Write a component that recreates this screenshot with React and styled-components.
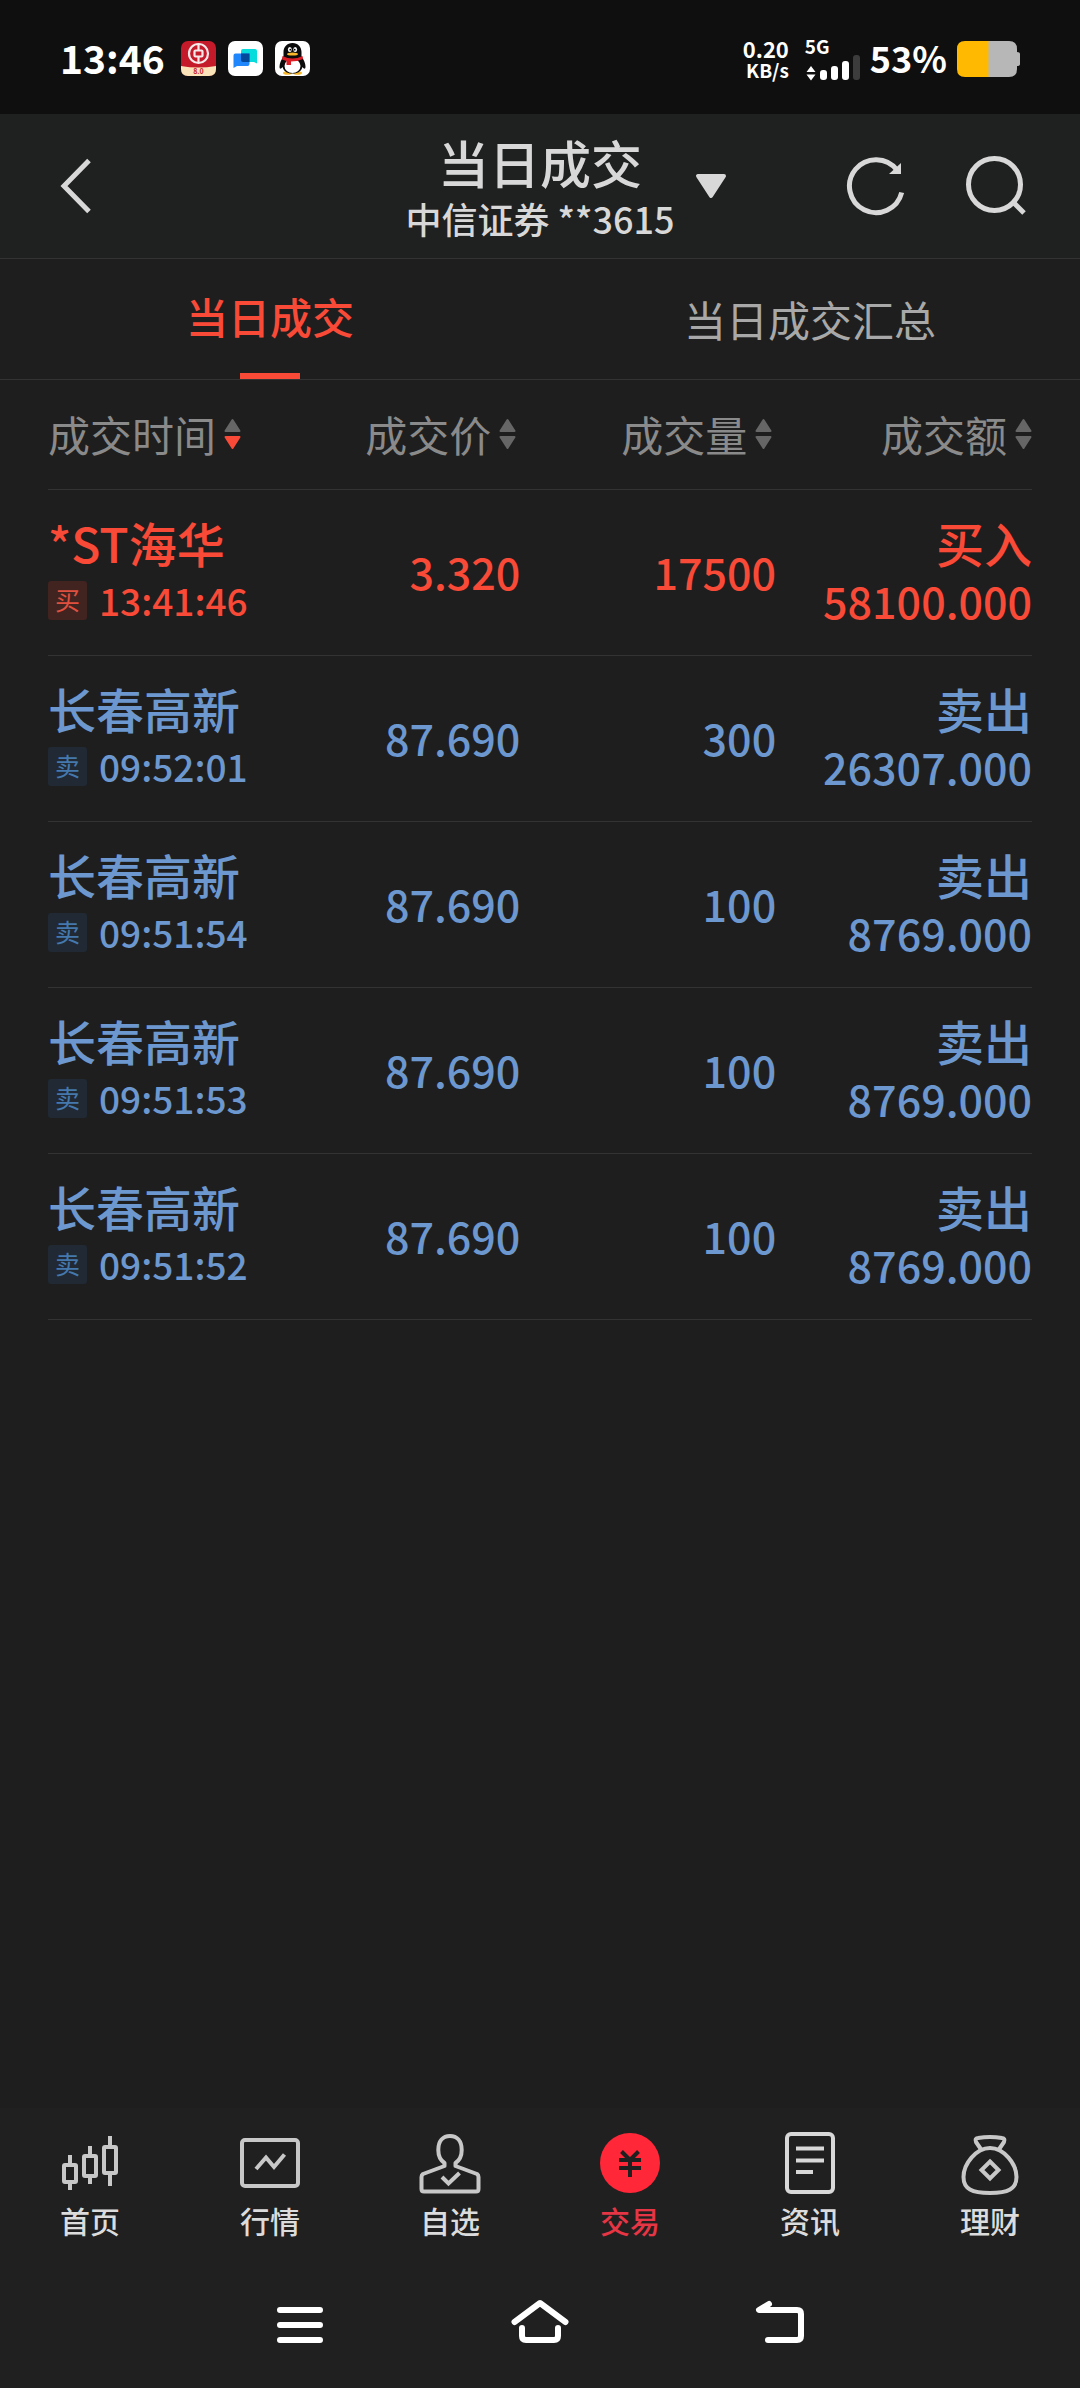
import React, { useState } from 'react';
import styled, { createGlobalStyle } from 'styled-components'

const red = '#f94a38'
const blue = '#6c98cf'

const GlobalStyle = createGlobalStyle`
  * {
    box-sizing: border-box;
  }
  body {
    margin: 0;
    background-color: #1e1e1e;
    font-family: "Noto Sans CJK SC", "Noto Sans", sans-serif;
    color: #d8d8d8;
  }
  button {
    padding: 0;
    border: none;
    background: none;
    color: inherit;
    font: inherit;
    cursor: pointer;
  }
  svg {
    display: block;
  }
`
const Page = styled.div`
  display: flex;
  flex-direction: column;
  min-height: 100vh;
`

/* status bar */

const StatusBar = styled.div`
  display: flex;
  justify-content: space-between;
  align-items: center;
  height: 114px;
  padding: 3px 60px 0;
  background-color: #0f0f0f;
  color: #fff;
`
const StatusGroup = styled.div`
  display: flex;
  align-items: center;
  gap: ${props => props.$gap}px;
`
const Clock = styled.span`
  margin-right: 4px;
  padding-bottom: 4px;
  font-size: 39px;
  font-weight: 700;
  line-height: 44px;
`
const NetSpeed = styled.span`
  display: flex;
  flex-direction: column;
  align-items: flex-end;
  margin-right: 6px;
  font-weight: 700;
  line-height: 22px;
`
const Speed = styled.span`
  font-size: 22px;
`
const SpeedUnit = styled.span`
  font-size: 19px;
`
const Signal = styled.span`
  display: flex;
  flex-direction: column;
  font-size: 19px;
  font-weight: 700;
  line-height: 18px;
`
const Percent = styled.span`
  padding-bottom: 4px;
  font-size: 36px;
  font-weight: 700;
  line-height: 44px;
`

/* title bar */

const TitleBar = styled.header`
  display: grid;
  grid-template-columns: 1fr auto 1fr;
  align-items: center;
  height: 145px;
  padding: 0 54px;
  background-color: #1f2120;
  border-bottom: 1px solid #333;
`
const IconButton = styled.button`
  width: 64px;
  height: 64px;
`
const TitleText = styled.div`
  text-align: center;
`
const Title = styled.h1`
  margin: 0;
  font-size: 51px;
  font-weight: 500;
  line-height: 64px;
`
const Account = styled.p`
  margin: 0;
  font-size: 36px;
  font-weight: 500;
  line-height: 48px;
`
const TitleActions = styled.div`
  display: flex;
  align-items: center;
  gap: 54px;
`
const DropButton = styled.button`
  margin: 0 auto 0 20px;
`

/* tabs */

const Tabs = styled.div`
  display: flex;
  height: 121px;
  border-bottom: 1px solid #333;
`
const Tab = styled.button`
  position: relative;
  flex: 1;
  padding-bottom: ${props => props.$active ? 8 : 2}px;
  font-size: 42px;
  font-weight: ${props => props.$active ? 500 : 400};
  color: ${props => props.$active ? red : '#a8a8a8'};
  &::after {
    content: '';
    position: absolute;
    left: 50%;
    bottom: 0;
    width: 60px;
    height: 6px;
    margin-left: -30px;
    background-color: ${props => props.$active ? red : 'transparent'};
  }
`

/* deals */

const Main = styled.main`
  flex: 1;
  padding: 0 48px;
`
const Table = styled.table`
  width: 100%;
  border-collapse: collapse;
  table-layout: fixed;
`
const HeadCell = styled.th`
  width: ${props => props.$width};
  height: 109px;
  padding: 0;
  border-bottom: 1px solid #333;
  font-weight: 400;
  &:not(:last-child) {
    padding-right: 4px;
  }
`
const SortButton = styled.button`
  display: flex;
  align-items: center;
  gap: 8px;
  margin-left: ${props => props.$left ? '0' : 'auto'};
  font-size: 42px;
  line-height: 60px;
  color: #8a8a8a;
  white-space: nowrap;
`
const Row = styled.tr`
  color: ${props => props.$buy ? red : blue};
`
const Cell = styled.td`
  height: 166px;
  padding: 0 0 2px;
  border-bottom: 1px solid #333;
  text-align: ${props => props.$left ? 'left' : 'right'};
  white-space: nowrap;
`
const Name = styled.div`
  font-size: 48px;
  font-weight: 500;
  line-height: 58px;
`
const Figure = styled.div`
  font-size: 43px;
  font-weight: 500;
  line-height: 58px;
`
const TimeLine = styled.div`
  display: flex;
  align-items: center;
  gap: 12px;
  font-size: 37px;
  font-weight: 500;
  line-height: 58px;
`
const Badge = styled.span`
  width: 39px;
  height: 39px;
  border-radius: 3px;
  background-color: ${props => props.$buy ? '#412320' : '#202934'};
  color: ${props => props.$buy ? '#e0503f' : '#4579ad'};
  font-size: 25px;
  font-weight: 400;
  line-height: 37px;
  text-align: center;
`

/* bottom bars */

const BottomNav = styled.nav`
  display: flex;
  padding: 24px 0 20px;
  background-color: #202020;
`
const NavLink = styled.a`
  flex: 1;
  display: flex;
  flex-direction: column;
  align-items: center;
  gap: 4px;
  color: ${props => props.$active ? '#e63544' : '#dcdcdc'};
  font-size: 30px;
  font-weight: 500;
  line-height: 40px;
  text-decoration: none;
`
const SystemNav = styled.div`
  display: flex;
  justify-content: center;
  gap: 176px;
  padding: 33px 0 31px;
  background-color: #202020;
`

const BankIcon = () => (
  <svg width="35" height="35" viewBox="0 0 35 35">
    <rect width="35" height="35" rx="7" fill="#c41a2a" />
    <path d="M0 25 Q17 28 35 25 V28 Q35 35 28 35 H7 Q0 35 0 28Z" fill="#fae3b8" />
    <circle cx="17.5" cy="12.5" r="9.5" fill="none" stroke="#f6e9ea" strokeWidth="2.2" />
    <rect x="13.5" y="9.5" width="8" height="6" rx="1" fill="none" stroke="#f6e9ea" strokeWidth="2.2" />
    <path d="M17.5 3V9.5M17.5 15.5V22" stroke="#f6e9ea" strokeWidth="2.2" />
    <text x="17.5" y="32.5" textAnchor="middle" fontSize="7" fontWeight="700" fill="#c8202c">8.0</text>
  </svg>
)

const ChatIcon = () => (
  <svg width="35" height="35" viewBox="0 0 35 35">
    <rect width="35" height="35" rx="7" fill="#fff" />
    <path d="M15 8H27Q29 8 29 10V22.5L26 21H15Q13 21 13 19V10Q13 8 15 8Z" fill="#07dcdc" />
    <path d="M7.5 12.5H21.5V23Q21.5 25 19.5 25H9L5.5 27V14.5Q5.5 12.5 7.5 12.5Z" fill="#1f86fb" />
    <path d="M13 12.5H21.5V21H15Q13 21 13 19Z" fill="#04489c" />
  </svg>
)

const PenguinIcon = () => (
  <svg width="35" height="35" viewBox="0 0 35 35">
    <rect width="35" height="35" rx="7" fill="#fff" />
    <ellipse cx="12.5" cy="32" rx="4.5" ry="1.8" fill="#f8b62b" />
    <ellipse cx="22.5" cy="32" rx="4.5" ry="1.8" fill="#f8b62b" />
    <path d="M17.5 2C12 2 8.5 6 8.5 11V15C6.5 18.5 4.5 22 4.5 25.5C4.5 28.5 6 28 7.5 26C9 31 13 32.5 17.5 32.5C22 32.5 26 31 27.5 26C29 28 30.5 28.5 30.5 25.5C30.5 22 28.5 18.5 26.5 15V11C26.5 6 23 2 17.5 2Z" fill="#0b0b0b" />
    <ellipse cx="17.5" cy="25" rx="8" ry="7" fill="#fff" />
    <ellipse cx="14.8" cy="8.5" rx="1.9" ry="2.6" fill="#fff" />
    <ellipse cx="20.2" cy="8.5" rx="1.9" ry="2.6" fill="#fff" />
    <circle cx="15.3" cy="8.7" r="0.9" />
    <circle cx="19.7" cy="8.7" r="0.9" />
    <ellipse cx="17.5" cy="13" rx="5.5" ry="1.6" fill="#f8b62b" />
    <path d="M7.5 15Q17.5 20 27.5 15L28 18Q22 20.5 16 20.5V24H11.5V20L7 18.5Z" fill="#dc1f26" />
  </svg>
)

const SignalBars = () => (
  <svg width="55" height="26" viewBox="0 0 55 26">
    <path d="M6 11L10.5 17H1.5ZM1.5 19.5H10.5L6 25.5Z" fill="#fff" />
    <rect x="15" y="15" width="7" height="10" rx="3" fill="#fff" />
    <rect x="26" y="11" width="7" height="14" rx="3" fill="#fff" />
    <rect x="37" y="6" width="7" height="19" rx="3" fill="#fff" />
    <rect x="48" y="0" width="7" height="25" rx="3" fill="#3c3c3c" />
  </svg>
)

const Battery = () => (
  <svg width="63" height="36" viewBox="0 0 63 36">
    <path d="M31 0H52Q60 0 60 8V11Q63 11 63 13V23Q63 25 60 25V28Q60 36 52 36H31Z" fill="#b7b7b7" />
    <path d="M8 0H31.5V36H8Q0 36 0 28V8Q0 0 8 0Z" fill="#ffb900" />
  </svg>
)

const SortArrows = ({ down }) => (
  <svg width="17" height="32" viewBox="0 0 17 32">
    <g strokeWidth="2" strokeLinejoin="round">
      <path d="M8.5 2L15.5 13H1.5Z" fill="#666" stroke="#666" />
      <path d="M1.5 19H15.5L8.5 30Z" fill={down ? red : '#666'} stroke={down ? red : '#666'} />
    </g>
  </svg>
)

// outline icon on the 64 grid
const Icon = ({ children, color = '#c8c8c8', width = 4, cap = 'butt' }) => (
  <svg width="64" height="64" viewBox="0 0 64 64" fill="none" stroke={color} strokeWidth={width} strokeLinecap={cap} strokeLinejoin="round">
    {children}
  </svg>
)

const navItems = [
  {
    label: '首页',
    icon: (
      <Icon>
        <rect x="6" y="33" width="12" height="17" rx="1" />
        <rect x="26" y="24" width="12" height="20" rx="1" />
        <rect x="46" y="15" width="12" height="26" rx="1" />
        <path d="M12 23V33M12 50V58M32 14V24M32 44V52M52 4V15M52 41V54" />
      </Icon>
    ),
  },
  {
    label: '行情',
    icon: (
      <Icon>
        <rect x="4" y="8" width="56" height="46" rx="3" />
        <path d="M18 37L28 25.5L36 35L46.5 22.5" strokeLinejoin="miter" />
      </Icon>
    ),
  },
  {
    label: '自选',
    icon: (
      <Icon>
        <path d="M26.5 34V31C22 28 20.3 24 20.3 18C20.3 9 25 4 32 4C39 4 43.7 9 43.7 18C43.7 24 42 28 37.5 31V34L59 42Q60.5 43 60.5 45V57Q60.5 59.5 58 59.5H6Q3.5 59.5 3.5 57V45Q3.5 43 5 42Z" />
        <path d="M24 45L30.5 51.5L41.5 41" strokeLinejoin="miter" />
      </Icon>
    ),
  },
  {
    label: '交易',
    active: true,
    icon: (
      <Icon color="#202020">
        <circle cx="32" cy="31" r="30" fill="#ff2738" stroke="none" />
        <path d="M23.5 19.5L32 28L40.5 19.5M21 28H43M21 36H43M32 28V45" />
      </Icon>
    ),
  },
  {
    label: '资讯',
    icon: (
      <Icon color="#d8d8d8">
        <rect x="9" y="2" width="46" height="58" rx="4" />
        <path d="M18 16.5H46M18 28.5H46M18 40H35" />
      </Icon>
    ),
  },
  {
    label: '理财',
    icon: (
      <Icon>
        <path d="M32 16C18 16 5.5 32 5.5 45C5.5 57 14 61 32 61C50 61 58.5 57 58.5 45C58.5 32 46 16 32 16Z" />
        <path d="M23.5 18L18 10Q16.5 6.5 20 6Q32 4 44 6Q47.5 6.5 46 10L40.5 18" />
        <path d="M32 29.5L40.5 38L32 46.5L23.5 38Z" strokeLinejoin="miter" />
      </Icon>
    ),
  },
]

const columns = [
  { label: '成交时间', width: '24%' },
  { label: '成交价', width: '24%' },
  { label: '成交量', width: '26%' },
  { label: '成交额', width: '26%' },
]

const deals = [
  { name: '*ST海华', time: '13:41:46', price: '3.320', volume: '17500', amount: '58100.000', buy: true },
  { name: '长春高新', time: '09:52:01', price: '87.690', volume: '300', amount: '26307.000' },
  { name: '长春高新', time: '09:51:54', price: '87.690', volume: '100', amount: '8769.000' },
  { name: '长春高新', time: '09:51:53', price: '87.690', volume: '100', amount: '8769.000' },
  { name: '长春高新', time: '09:51:52', price: '87.690', volume: '100', amount: '8769.000' },
]

const Status = () => {
  return (
    <StatusBar>
      <StatusGroup $gap={12}>
        <Clock>13:46</Clock>
        <BankIcon />
        <ChatIcon />
        <PenguinIcon />
      </StatusGroup>
      <StatusGroup $gap={10}>
        <NetSpeed>
          <Speed>0.20</Speed>
          <SpeedUnit>KB/s</SpeedUnit>
        </NetSpeed>
        <Signal>
          5G
          <SignalBars />
        </Signal>
        <Percent>53%</Percent>
        <Battery />
      </StatusGroup>
    </StatusBar>
  )
}

const Header = () => {
  return (
    <TitleBar>
      <IconButton aria-label="返回">
        <Icon color="#d8d8d8" width={5}>
          <path d="M35 6.5L10 32L35 57.5" strokeLinejoin="miter" />
        </Icon>
      </IconButton>
      <TitleText>
        <Title>当日成交</Title>
        <Account>中信证券 **3615</Account>
      </TitleText>
      <TitleActions>
        <DropButton aria-label="切换账户">
          <svg width="32" height="26" viewBox="0 0 32 26">
            <path d="M3 3H29L16 23Z" fill="#d8d8d8" stroke="#d8d8d8" strokeWidth="4" strokeLinejoin="round" />
          </svg>
        </DropButton>
        <IconButton aria-label="刷新">
          <Icon color="#d8d8d8" width={5}>
            <path d="M53 16A26.5 26.5 0 1 0 57.7 38.5" />
            <path d="M45 20L57 9V20Z" fill="#d8d8d8" stroke="none" />
          </Icon>
        </IconButton>
        <IconButton aria-label="搜索">
          <Icon color="#d8d8d8" width={5}>
            <circle cx="32.5" cy="30.5" r="26" />
            <path d="M52 49L62 59" />
          </Icon>
        </IconButton>
      </TitleActions>
    </TitleBar>
  )
}

const Deal = ({ deal }) => {
  return (
    <Row $buy={deal.buy}>
      <Cell $left>
        <Name>{deal.name}</Name>
        <TimeLine>
          <Badge $buy={deal.buy}>{deal.buy ? '买' : '卖'}</Badge>
          {deal.time}
        </TimeLine>
      </Cell>
      <Cell>
        <Figure>{deal.price}</Figure>
      </Cell>
      <Cell>
        <Figure>{deal.volume}</Figure>
      </Cell>
      <Cell>
        <Name>{deal.buy ? '买入' : '卖出'}</Name>
        <Figure>{deal.amount}</Figure>
      </Cell>
    </Row>
  )
}

const App = () => {
  const [tab, setTab] = useState(0)

  return (
    <Page>
      <GlobalStyle />
      <Status />
      <Header />
      <Tabs role="tablist">
        {['当日成交', '当日成交汇总'].map((label, i) => (
          <Tab key={label} role="tab" aria-selected={tab === i} $active={tab === i} onClick={() => setTab(i)}>
            {label}
          </Tab>
        ))}
      </Tabs>
      <Main>
        <Table>
          <thead>
            <tr>
              {columns.map((col, i) => (
                <HeadCell key={col.label} $width={col.width}>
                  <SortButton $left={i === 0}>
                    {col.label}
                    <SortArrows down={i === 0} />
                  </SortButton>
                </HeadCell>
              ))}
            </tr>
          </thead>
          <tbody>
            {deals.map(deal => <Deal key={deal.time} deal={deal} />)}
          </tbody>
        </Table>
      </Main>
      <BottomNav>
        {navItems.map(item => (
          <NavLink key={item.label} href="#" $active={item.active}>
            {item.icon}
            {item.label}
          </NavLink>
        ))}
      </BottomNav>
      <SystemNav>
        <IconButton aria-label="菜单">
          <Icon color="#fff" width={6} cap="round">
            <path d="M12 17H52M12 32H52M12 47H52" />
          </Icon>
        </IconButton>
        <IconButton aria-label="主屏幕">
          <Icon color="#fff" width={6} cap="round">
            <path d="M6.5 29L32 10L57.5 29M14 35V43Q14 47 18 47H46Q50 47 50 43V35" />
          </Icon>
        </IconButton>
        <IconButton aria-label="后退">
          <Icon color="#fff" width={6} cap="round">
            <path d="M21 11L11 17H49Q53 17 53 21V43Q53 47 49 47H20" />
          </Icon>
        </IconButton>
      </SystemNav>
    </Page>
  )
}

export default App
